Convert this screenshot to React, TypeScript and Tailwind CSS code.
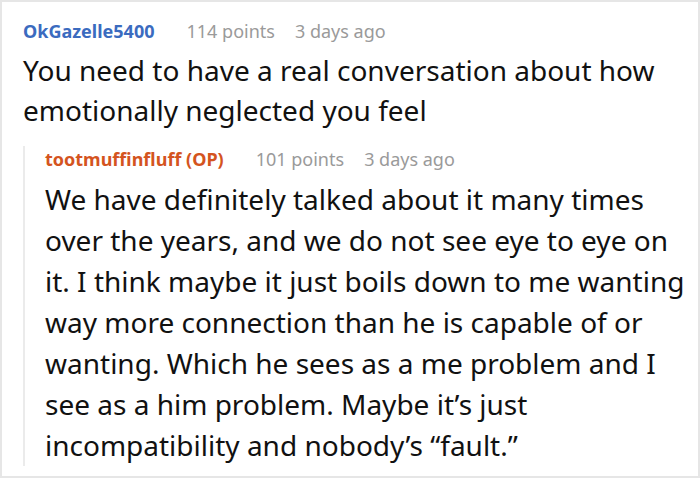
export default function App() {
  return (
    <div className="h-[478px] w-[700px] overflow-hidden border-2 border-[#e6e6e6] bg-white font-['Noto_Sans',sans-serif]">
      <div className="pl-[21px] pt-[16px]">
        <div className="flex items-center text-[18px] leading-[26px]">
          <span className="font-bold text-[#3b6bbf]">OkGazelle5400</span>
          <span className="ml-[32px] text-[#9a9a9a]">114 points</span>
          <span className="ml-[20px] text-[#9a9a9a]">3 days ago</span>
        </div>
        <p className="mt-[6px] text-[28px] leading-[40px] text-[#111]">
          You need to have a real conversation about how emotionally neglected you feel
        </p>
        <div className="mt-[16px] border-l-2 border-[#ebebeb] pl-[20px]">
          <div className="flex items-center text-[18px] leading-[26px]">
            <span className="font-bold text-[#d4541e]">tootmuffinfluff (OP)</span>
            <span className="ml-[32px] text-[#9a9a9a]">101 points</span>
            <span className="ml-[20px] text-[#9a9a9a]">3 days ago</span>
          </div>
          <p className="mt-[7px] pr-[8px] text-[28px] leading-[41px] text-[#111]">
            We have definitely talked about it many times over the years, and we do not see eye to eye on it. I think maybe it just boils down to me wanting way more connection than he is capable of or wanting. Which he sees as a me problem and I see as a him problem. Maybe it’s just incompatibility and nobody’s “fault.”
          </p>
        </div>
      </div>
    </div>
  );
}
